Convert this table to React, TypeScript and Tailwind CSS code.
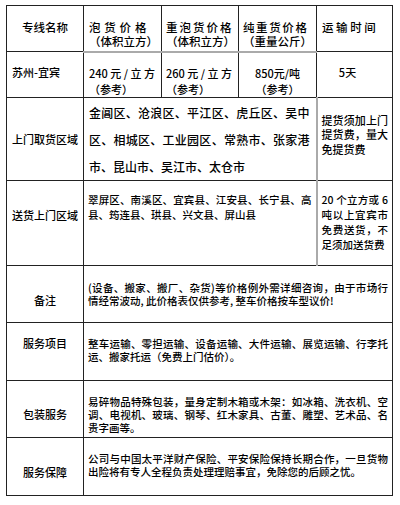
import React from "react";

type LineProps = { children: React.ReactNode; last?: boolean };

// one printed line; all but the last are stretched across the cell
function Line({ children, last }: LineProps) {
  return (
    <div className={last ? "text-left whitespace-nowrap" : "text-justify [text-align-last:justify]"}>
      {children}
    </div>
  );
}

const td = "border border-[#222] p-0 align-top";

export default function App() {
  return (
    <div className="w-[400px] h-[505px] bg-white pl-[6px] pt-[5px] text-black font-['Noto_Sans_CJK_SC','Noto_Sans',sans-serif] font-medium overflow-hidden">
      <table className="table-fixed border-collapse w-[386px]">
        <colgroup>
          <col className="w-[77px]" />
          <col className="w-[78px]" />
          <col className="w-[77px]" />
          <col className="w-[78px]" />
          <col className="w-[76px]" />
        </colgroup>
        <tbody>
          {/* header */}
          <tr className="h-[46px] text-[11.5px] leading-[14px] whitespace-nowrap">
            <td className={td}>
              <div className="pt-[14px] text-center">专线名称</div>
            </td>
            <td className={`${td} border-b-2 border-b-[#aaa]`}>
              <div className="pt-[14px] pl-[5px]">
                <div className="tracking-[3.8px]">泡货价格</div>
                <div>（体积立方）</div>
              </div>
            </td>
            <td className={`${td} border-b-2 border-b-[#aaa]`}>
              <div className="pt-[14px] pl-[4px]">
                <div className="tracking-[2px]">重泡货价格</div>
                <div>（体积立方）</div>
              </div>
            </td>
            <td className={`${td} border-b-2 border-b-[#aaa]`}>
              <div className="pt-[14px] pl-[4px]">
                <div className="tracking-[1.6px]">纯重货价格</div>
                <div>（重量公斤）</div>
              </div>
            </td>
            <td className={td}>
              <div className="pt-[14px] pl-[5px] tracking-[2.6px]">运输时间</div>
            </td>
          </tr>

          {/* route row */}
          <tr className="h-[42px] text-[11px] leading-[16px]">
            <td className={td}>
              <div className="pt-[12px] pl-[5px] whitespace-nowrap">苏州-宜宾</div>
            </td>
            <td className={td}>
              <div className="pt-[12px] pl-[5px] pr-[6px]">
                <Line>240元/立方</Line>
                <Line last>（参考）</Line>
              </div>
            </td>
            <td className={td}>
              <div className="pt-[12px] pl-[4px] pr-[6px]">
                <Line>260元/立方</Line>
                <Line last>（参考）</Line>
              </div>
            </td>
            <td className={td}>
              <div className="pt-[12px] text-center whitespace-nowrap">
                <div>850元/吨</div>
                <div>（参考）</div>
              </div>
            </td>
            <td className={td}>
              <div className="pt-[12px] pr-[14px] text-center">5天</div>
            </td>
          </tr>

          {/* pickup */}
          <tr className="h-[83px]">
            <td className={td}>
              <div className="pt-[35px] text-center text-[11px] leading-[13px] whitespace-nowrap">上门取货区域</div>
            </td>
            <td colSpan={3} className={td}>
              <div className="pt-[1px] pl-[5px] pr-[6px] text-[12px] leading-[27px]">
                <Line>金阊区、沧浪区、平江区、虎丘区、吴中</Line>
                <Line>区、相城区、工业园区、常熟市、张家港</Line>
                <Line last>市、昆山市、吴江市、太仓市</Line>
              </div>
            </td>
            <td className={`${td} border-l-2 border-l-[#aaa]`}>
              <div className="pt-[15px] pl-[4px] pr-[4px] text-[11px] leading-[14.5px]">
                <Line>提货须加上门</Line>
                <Line>提货费，量大</Line>
                <Line last>免提货费</Line>
              </div>
            </td>
          </tr>

          {/* delivery */}
          <tr className="h-[85px]">
            <td className={td}>
              <div className="pt-[28px] text-center text-[11px] leading-[13px] whitespace-nowrap">送货上门区域</div>
            </td>
            <td colSpan={3} className={td}>
              <div className="pt-[11px] pl-[4px] pr-[4px] text-[10.5px] leading-[15px]">
                <Line>翠屏区、南溪区、宜宾县、江安县、长宁县、高</Line>
                <Line last>县、筠连县、珙县、兴文县、屏山县</Line>
              </div>
            </td>
            <td className={`${td} border-l-2 border-l-[#aaa]`}>
              <div className="pt-[11px] pl-[4px] pr-[4px] text-[10.5px] leading-[15px]">
                <Line>20 个立方或 6</Line>
                <Line>吨以上宜宾市</Line>
                <Line>免费送货，不</Line>
                <Line last>足须加送货费</Line>
              </div>
            </td>
          </tr>

          {/* notes */}
          <tr className="h-[57px] text-[10.5px] leading-[13px]">
            <td className={td}>
              <div className="pt-[28px] text-center text-[11px]">备注</div>
            </td>
            <td colSpan={4} className={td}>
              <div className="pt-[15px] pl-[4px] pr-[4px]">
                <Line>(设备、搬家、搬厂、杂货)等价格例外需详细咨询，由于市场行</Line>
                <Line last>情经常波动, 此价格表仅供参考, 整车价格按车型议价!</Line>
              </div>
            </td>
          </tr>

          {/* services */}
          <tr className="h-[58px] text-[10.5px] leading-[13px]">
            <td className={td}>
              <div className="pt-[14px] text-center text-[11px]">服务项目</div>
            </td>
            <td colSpan={4} className={td}>
              <div className="pt-[14px] pl-[4px] pr-[4px]">
                <Line>整车运输、零担运输、设备运输、大件运输、展览运输、行李托</Line>
                <Line last>运、搬家托运（免费上门估价）。</Line>
              </div>
            </td>
          </tr>

          {/* packing */}
          <tr className="h-[57px] text-[10.5px] leading-[13px]">
            <td className={td}>
              <div className="pt-[27px] text-center text-[11px]">包装服务</div>
            </td>
            <td colSpan={4} className={td}>
              <div className="pt-[14px] pl-[4px] pr-[4px]">
                <Line>易碎物品特殊包装，量身定制木箱或木架：如冰箱、洗衣机、空</Line>
                <Line>调、电视机、玻璃、钢琴、红木家具、古董、雕塑、艺术品、名</Line>
                <Line last>贵字画等。</Line>
              </div>
            </td>
          </tr>

          {/* guarantee */}
          <tr className="h-[58px] text-[10.5px] leading-[13px]">
            <td className={td}>
              <div className="pt-[28px] text-center text-[11px]">服务保障</div>
            </td>
            <td colSpan={4} className={td}>
              <div className="pt-[14px] pl-[4px] pr-[4px]">
                <Line>公司与中国太平洋财产保险、平安保险保持长期合作，一旦货物</Line>
                <Line last>出险将有专人全程负责处理理赔事宜，免除您的后顾之忧。</Line>
              </div>
            </td>
          </tr>
        </tbody>
      </table>
    </div>
  );
}
